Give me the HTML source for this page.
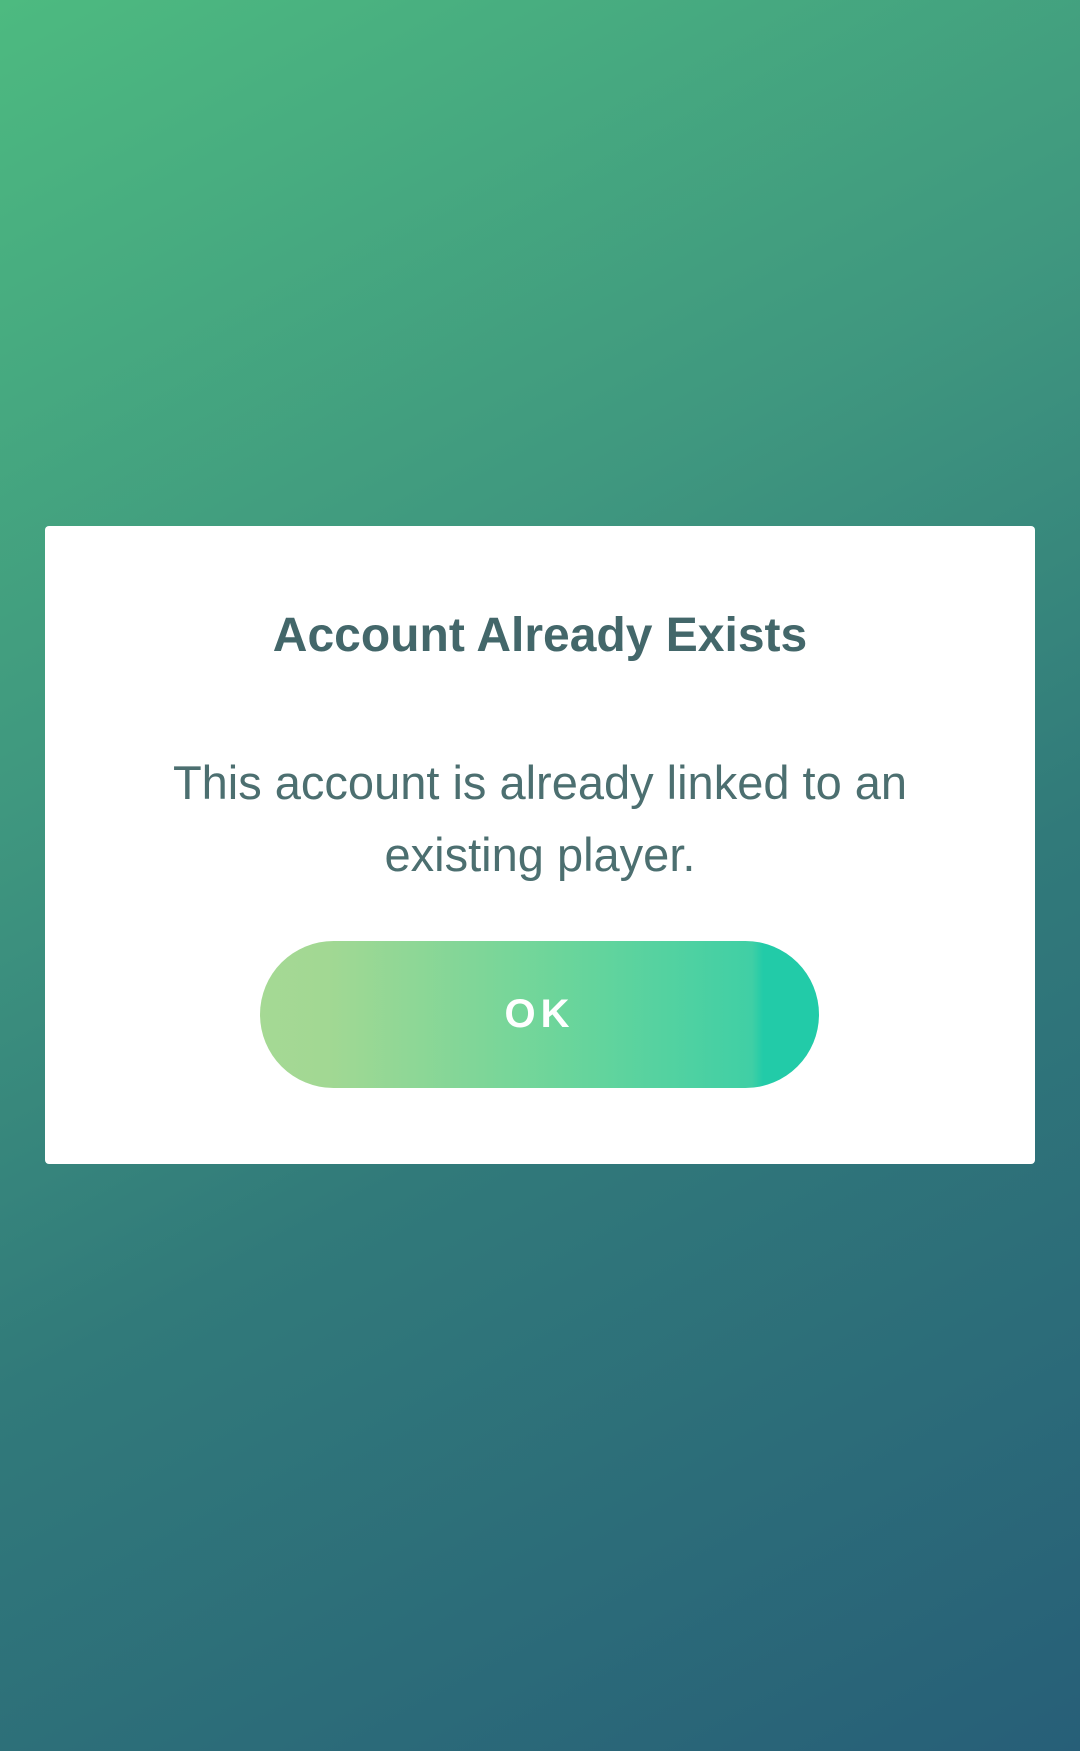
<!DOCTYPE html>
<html><head><meta charset="utf-8"><style>
html,body{margin:0;padding:0;}
body{width:1080px;height:1751px;overflow:hidden;position:relative;
background:linear-gradient(152deg,#4dba80 0%,#3f977f 35%,#317a7a 60%,#275f78 100%);
font-family:"Liberation Sans",sans-serif;}
.dlg{position:absolute;left:45px;top:526px;width:990px;height:638px;background:#fff;border-radius:4px;}
.t{position:absolute;left:0;right:0;top:608px;text-align:center;font-weight:bold;font-size:48px;color:#43676a;line-height:56px;}
.b{position:absolute;left:0;right:0;top:747px;text-align:center;font-size:47px;color:#4c6f70;line-height:72px;}
.btn{position:absolute;left:260px;top:941px;width:559px;height:147px;border-radius:74px;
background:linear-gradient(90deg,#a5d994 0%,#a2d893 12%,#6ad59b 55%,#40cfa5 88%,#22cba8 90%,#22cba8 100%);
color:#fff;font-weight:bold;font-size:40px;letter-spacing:5px;text-align:center;line-height:147px;}
</style></head><body>
<div class="dlg"></div>
<div class="t">Account Already Exists</div>
<div class="b">This account is already linked to an<br>existing player.</div>
<div class="btn">OK</div>
</body></html>
